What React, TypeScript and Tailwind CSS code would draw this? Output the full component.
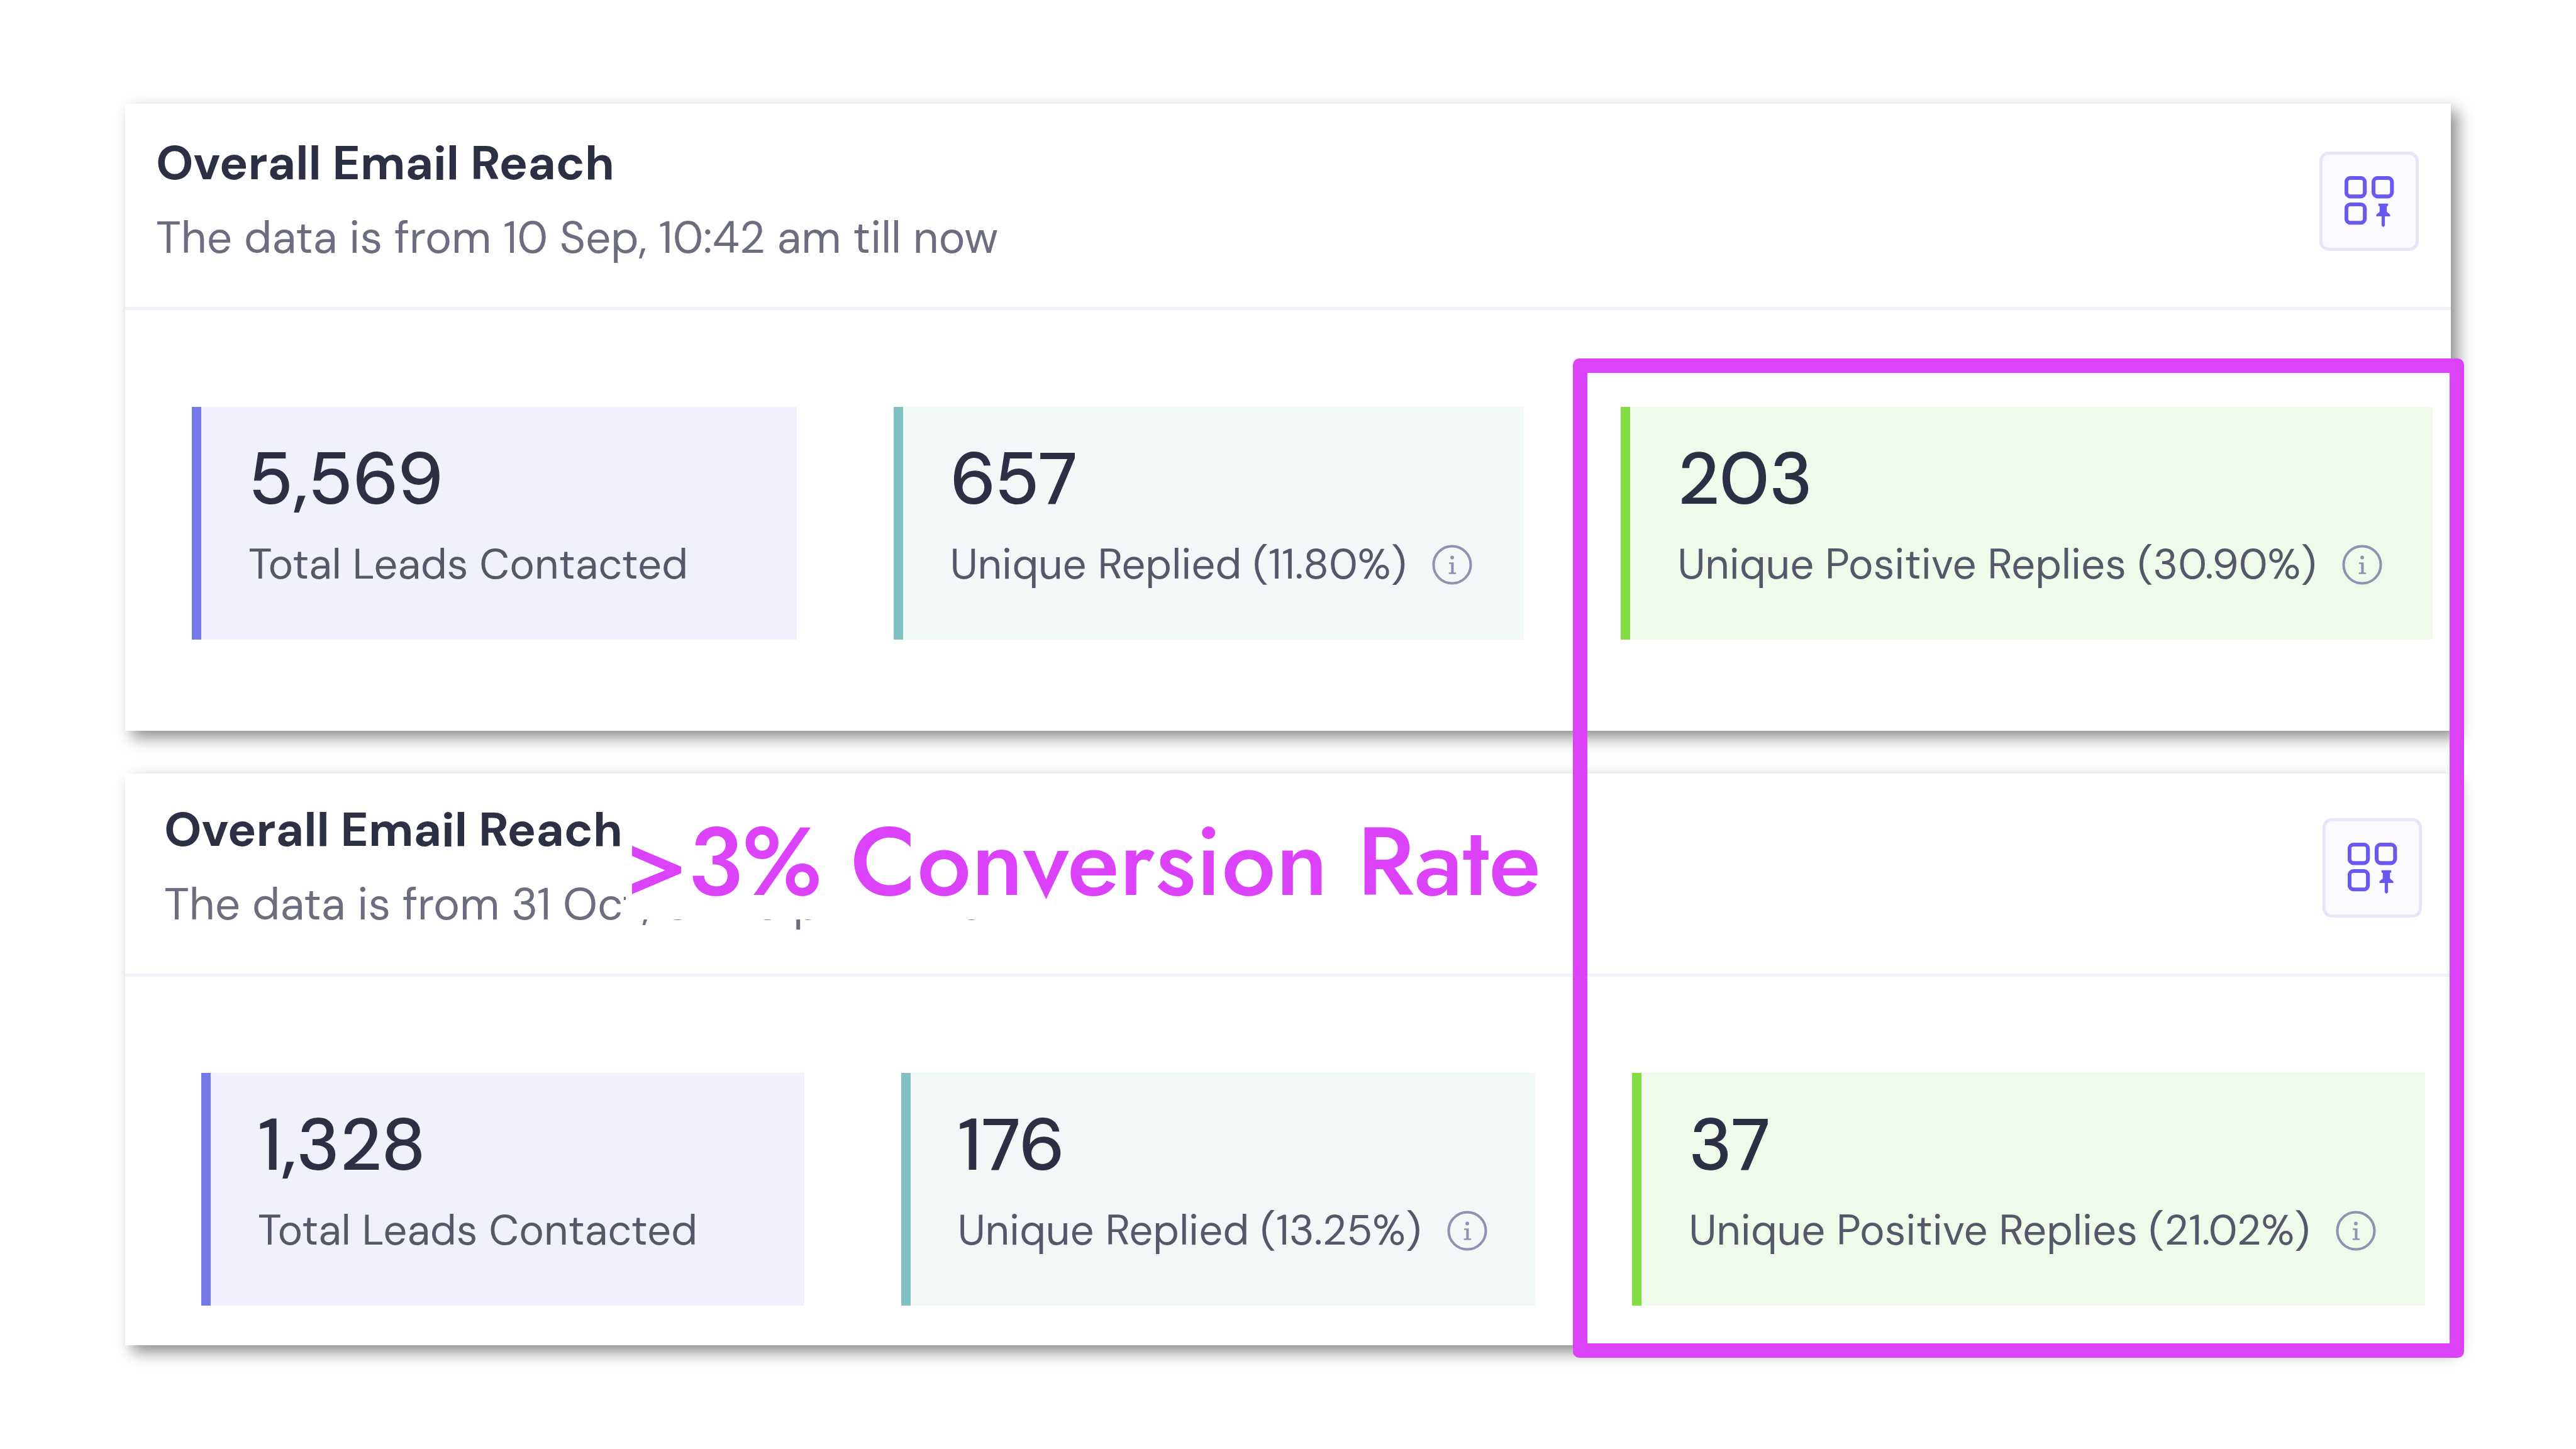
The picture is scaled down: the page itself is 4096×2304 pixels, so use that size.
import { clsx } from 'clsx';

type Tone = 'violet' | 'teal' | 'green';

interface Stat {
  value: string;
  label: string;
  tone: Tone;
  info?: boolean;
}

const tones: Record<Tone, string> = {
  violet: 'border-[#7579e7] bg-[#f1f0fd]',
  teal: 'border-[#80c1c1] bg-[#f2f8f8]',
  green: 'border-[#82dd42] bg-[#f0faeb]',
};

const firstStats: Stat[] = [
  { value: '5,569', label: 'Total Leads Contacted', tone: 'violet' },
  { value: '657', label: 'Unique Replied (11.80%)', tone: 'teal', info: true },
  { value: '203', label: 'Unique Positive Replies (30.90%)', tone: 'green', info: true },
];

const secondStats: Stat[] = [
  { value: '1,328', label: 'Total Leads Contacted', tone: 'violet' },
  { value: '176', label: 'Unique Replied (13.25%)', tone: 'teal', info: true },
  { value: '37', label: 'Unique Positive Replies (21.02%)', tone: 'green', info: true },
];

function InfoIcon() {
  return (
    <svg viewBox="0 0 78 78" className="size-16 shrink-0 text-[#9191b1]" fill="none" aria-hidden="true">
      <circle cx="39" cy="39" r="36" stroke="currentColor" strokeWidth="5" />
      <circle cx="39" cy="25" r="3.6" fill="currentColor" />
      <path d="M33 34.5h9V54h4.5v3h-14v-3H37V37.5h-4z" fill="currentColor" />
    </svg>
  );
}

function PinWidgetIcon() {
  return (
    <svg viewBox="0 0 97 99" className="h-[81px] w-[79px] text-[#6a59ee]" fill="none" aria-hidden="true">
      <g stroke="currentColor" strokeWidth="7.5">
        <rect x="3.5" y="3.5" width="36" height="36" rx="8" />
        <rect x="56.5" y="3.5" width="36" height="36" rx="8" />
        <rect x="3.5" y="55" width="36" height="36" rx="8" />
      </g>
      <path
        d="M66 53.5h19v4l-2.500 1.500v10.500l6.500 5.500v3.500h-10.300v18l-3.200 3-3.200-3v-18H62V75l6.500-5.500V59L66 57.500z"
        fill="currentColor"
      />
    </svg>
  );
}

function StatTile({ value, label, tone, info }: Stat) {
  return (
    <div className={clsx('border-l-[15px] pt-[51px] pb-[79px] pl-[75px]', tones[tone])}>
      <p className="text-[116px] leading-[128px] font-medium text-[#2d3044]">{value}</p>
      <div className="mt-[32px] flex items-center gap-[41px]">
        <p className="text-[67px] leading-[80px] whitespace-nowrap text-[#56586a]">{label}</p>
        {info && <InfoIcon />}
      </div>
    </div>
  );
}

interface ReachCardProps {
  period: string;
  stats: Stat[];
  headerClass: string;
  gridClass: string;
  note?: string;
}

function ReachCard({ period, stats, headerClass, gridClass, note }: ReachCardProps) {
  return (
    <section className="relative bg-white shadow-[11px_11px_23px_rgba(0,0,0,0.45)]">
      <header className={clsx('flex items-start justify-between border-b-[5px] border-[#f1f1fa] pb-[70px]', headerClass)}>
        <div>
          <h2 className="text-[76px] leading-[96px] font-bold text-[#2d3044]">Overall Email Reach</h2>
          <p className="mt-[30px] text-[71px] leading-[80px] text-[#6c6d7e]">{period}</p>
        </div>
        <button
          type="button"
          aria-label="Pin widget"
          className="mt-[29px] flex size-[158px] items-center justify-center rounded-[15px] border-[5px] border-[#e6e6f9] bg-[#fbfaff]"
        >
          <PinWidgetIcon />
        </button>
      </header>
      <div className={clsx('grid gap-[154px]', gridClass)}>
        {stats.map((stat) => (
          <StatTile key={stat.tone} {...stat} />
        ))}
      </div>
      {note && (
        <p className="absolute top-[49px] left-[796px] h-[183px] bg-white text-[153px] leading-[181px] font-medium whitespace-nowrap text-[#dd42fb] font-['Futura','Jost','Lato',sans-serif]">
          {note}
        </p>
      )}
    </section>
  );
}

export default function App() {
  return (
    <main className="min-h-screen bg-white px-[199px] py-[165px] font-['DM_Sans','Inter',sans-serif]">
      <div className="relative flex flex-col gap-[68px]">
        <ReachCard
          period="The data is from 10 Sep, 10:42 am till now"
          stats={firstStats}
          headerClass="pt-[47px] pl-[49px] pr-[51px]"
          gridClass="grid-cols-[962fr_1003fr_1291fr] pt-[154px] pr-[29px] pb-[145px] pl-[106px]"
        />
        <ReachCard
          period="The data is from 31 Oct, 02:45 pm till now"
          stats={secondStats}
          headerClass="pt-[42px] pl-[62px] pr-[46px]"
          gridClass="grid-cols-[959fr_1009fr_1261fr] pt-[153px] pr-[41px] pb-[63px] pl-[121px]"
          note=">3% Conversion Rate"
        />
        <div className="pointer-events-none absolute top-[405px] -right-[21px] -bottom-[20px] left-[62.25%] rounded-[10px] border-[23px] border-[#dd42fb]" />
      </div>
    </main>
  );
}
